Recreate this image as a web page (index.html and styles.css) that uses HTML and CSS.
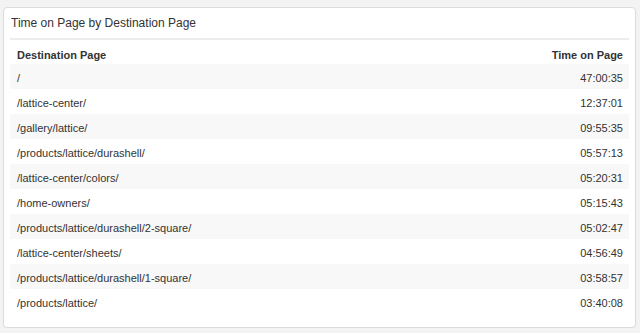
FILE: index.html
```html
<!DOCTYPE html>
<html>
<head>
<meta charset="utf-8">
<link rel="stylesheet" href="styles.css">
</head>
<body>
<div class="card">
  <div class="card-title">Time on Page by Destination Page</div>
  <table class="data">
    <thead>
      <tr><th class="left">Destination Page</th><th class="right">Time on Page</th></tr>
    </thead>
    <tbody>
      <tr><td>/</td><td class="right">47:00:35</td></tr>
      <tr><td>/lattice-center/</td><td class="right">12:37:01</td></tr>
      <tr><td>/gallery/lattice/</td><td class="right">09:55:35</td></tr>
      <tr><td>/products/lattice/durashell/</td><td class="right">05:57:13</td></tr>
      <tr><td>/lattice-center/colors/</td><td class="right">05:20:31</td></tr>
      <tr><td>/home-owners/</td><td class="right">05:15:43</td></tr>
      <tr><td>/products/lattice/durashell/2-square/</td><td class="right">05:02:47</td></tr>
      <tr><td>/lattice-center/sheets/</td><td class="right">04:56:49</td></tr>
      <tr><td>/products/lattice/durashell/1-square/</td><td class="right">03:58:57</td></tr>
      <tr><td>/products/lattice/</td><td class="right">03:40:08</td></tr>
    </tbody>
  </table>
</div>
</body>
</html>
```

FILE: styles.css
```css
html, body {
  margin: 0;
  padding: 0;
}
body {
  background: #f3f3f3;
  padding: 7px 4px 0 3px;
  font-family: "Liberation Sans", Arial, sans-serif;
  color: #333;
}
.card {
  background: #fff;
  border: 1px solid #dcdcdc;
  border-radius: 4px;
  padding: 0 6px 13px 6px;
  box-shadow: 0 1px 1px rgba(0,0,0,0.04);
}
.card-title {
  font-size: 12px;
  line-height: 18px;
  padding: 6px 0 6px 1px;
  border-bottom: 2px solid #ececec;
  color: #333;
}
.data {
  width: 100%;
  border-collapse: collapse;
  font-size: 11px;
}
.data th {
  font-weight: bold;
  line-height: 16px;
  padding: 7px 6px 1px 7px;
  color: #333;
}
.data td {
  line-height: 16px;
  padding: 6px 6px 3px 7px;
}
.data tbody tr:nth-child(odd) td {
  background: #f8f8f8;
}
.left { text-align: left; }
.right { text-align: right; }
```
